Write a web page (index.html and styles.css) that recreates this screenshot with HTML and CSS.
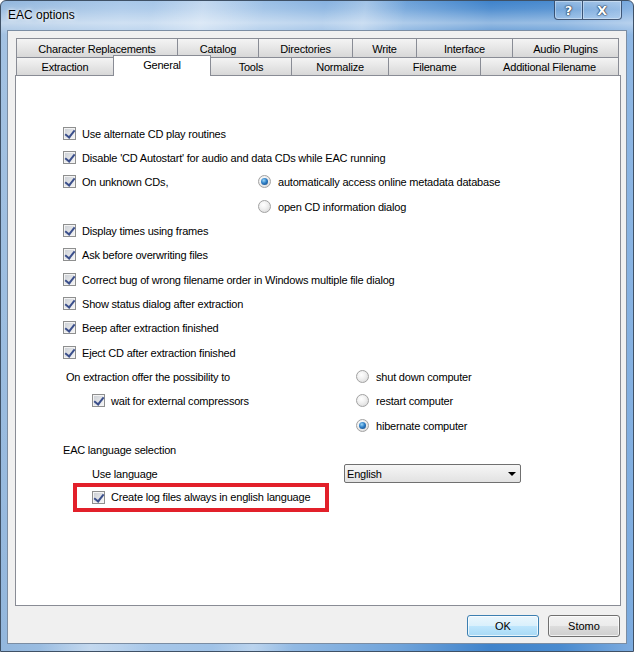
FILE: index.html
```html
<!DOCTYPE html>
<html lang="en">
<head>
    <meta charset="UTF-8">
    <title>EAC options</title>
    <link rel="stylesheet" href="styles.css">
</head>
<body>
    <div class="window">
        <div class="titlebar">
            <span class="title">EAC options</span>
            <div class="caption">
                <span class="cap cap-help">?</span>
                <span class="cap cap-close">X</span>
            </div>
        </div>

        <div class="client">
            <div class="tabs">
                <div class="tab-row back">
                    <div class="tab w-char">Character Replacements</div>
                    <div class="tab w-catalog">Catalog</div>
                    <div class="tab w-dirs">Directories</div>
                    <div class="tab w-write">Write</div>
                    <div class="tab w-iface">Interface</div>
                    <div class="tab w-plugins">Audio Plugins</div>
                </div>
                <div class="tab-row front">
                    <div class="tab w-extract">Extraction</div>
                    <div class="tab w-general active">General</div>
                    <div class="tab w-tools">Tools</div>
                    <div class="tab w-norm">Normalize</div>
                    <div class="tab w-fname">Filename</div>
                    <div class="tab w-addfname">Additional Filename</div>
                </div>
            </div>

            <div class="panel">
                <div class="row"><span class="cb"></span><span>Use alternate CD play routines</span></div>
                <div class="row"><span class="cb"></span><span>Disable 'CD Autostart' for audio and data CDs while EAC running</span></div>
                <div class="row">
                    <div class="col-a"><span class="cb"></span><span>On unknown CDs,</span></div>
                    <span class="rb on"></span><span>automatically access online metadata database</span>
                </div>
                <div class="row">
                    <div class="col-a"></div>
                    <span class="rb"></span><span>open CD information dialog</span>
                </div>
                <div class="row"><span class="cb"></span><span>Display times using frames</span></div>
                <div class="row"><span class="cb"></span><span>Ask before overwriting files</span></div>
                <div class="row"><span class="cb"></span><span>Correct bug of wrong filename order in Windows multiple file dialog</span></div>
                <div class="row"><span class="cb"></span><span>Show status dialog after extraction</span></div>
                <div class="row"><span class="cb"></span><span>Beep after extraction finished</span></div>
                <div class="row"><span class="cb"></span><span>Eject CD after extraction finished</span></div>
                <div class="row">
                    <div class="col-b"><span class="note">On extraction offer the possibility to</span></div>
                    <span class="rb"></span><span>shut down computer</span>
                </div>
                <div class="row">
                    <div class="col-b indent"><span class="cb"></span><span>wait for external compressors</span></div>
                    <span class="rb"></span><span>restart computer</span>
                </div>
                <div class="row">
                    <div class="col-b"></div>
                    <span class="rb on"></span><span>hibernate computer</span>
                </div>
                <div class="row"><span>EAC language selection</span></div>
                <div class="row">
                    <div class="col-c indent"><span>Use language</span></div>
                    <div class="select"><span>English</span></div>
                </div>
                <div class="highlight">
                    <span class="cb"></span><span>Create log files always in english language</span>
                </div>
            </div>

            <div class="buttons">
                <button class="btn default">OK</button>
                <button class="btn">Stomo</button>
            </div>
        </div>
    </div>
</body>
</html>
```

FILE: styles.css
```css
:root {
    --frame-line: #3f5166;
    --tab-border: #898c95;
    --dialog-bg: #f0f0f0;
    --check-blue: #3b4f8b;
    --mark-red: #e2202a;
}

* {
    margin: 0;
    padding: 0;
    box-sizing: border-box;
}

body {
    font-family: "Liberation Sans", Arial, sans-serif;
    font-size: 11px;
    letter-spacing: -0.2px;
    color: #000;
    background: #fff;
    width: 634px;
    height: 652px;
    overflow: hidden;
}

.window {
    width: 634px;
    height: 652px;
    padding: 0 6px 7px 6px;
    border: 1px solid var(--frame-line);
    border-radius: 6px 6px 0 0;
    display: flex;
    flex-direction: column;
    background:
        linear-gradient(to bottom, rgba(255,255,255,0) 0, rgba(255,255,255,0.1) 8px, rgba(255,255,255,0.45) 22px, rgba(255,255,255,0.15) 34px, rgba(255,255,255,0) 100%),
        linear-gradient(100deg, rgba(255,255,255,0) 150px, rgba(255,255,255,0.35) 200px, rgba(255,255,255,0) 260px, rgba(255,255,255,0) 320px, rgba(255,255,255,0.3) 360px, rgba(255,255,255,0) 400px),
        linear-gradient(to right, #93b7dd 0, #a9c8e9 120px, #9cc0e6 260px, #6fa3da 400px, #3f83cb 490px, #4a8bcf 560px, #7fade0 634px);
}

/* title bar */
.titlebar {
    height: 29px;
    display: flex;
    justify-content: space-between;
    align-items: flex-start;
}

.title {
    font-size: 12px;
    letter-spacing: 0;
    padding: 7px 0 0 1px;
    text-shadow: 0 0 6px #fff, 0 0 3px #fff;
}

.caption {
    display: flex;
    margin-right: 5px;
}

.cap {
    height: 19px;
    display: flex;
    align-items: center;
    justify-content: center;
    border: 1px solid rgba(30, 50, 80, 0.75);
    border-top: none;
    color: #fff;
    font-family: "DejaVu Sans", sans-serif;
    font-weight: bold;
    font-size: 13px;
    letter-spacing: 0;
    text-shadow: 0 0 2px #1d3048, 0 0 1px #1d3048, 0 0 1px #1d3048;
    background: linear-gradient(to bottom, rgba(255,255,255,0.4), rgba(255,255,255,0.15) 50%, rgba(190,220,250,0.3));
    box-shadow: inset 0 0 0 1px rgba(255,255,255,0.35);
}

.cap-help {
    width: 29px;
    border-radius: 0 0 0 4px;
}

.cap-close {
    width: 39px;
    border-left: none;
    border-radius: 0 0 4px 0;
}

/* client area */
.client {
    flex: 1;
    background: var(--dialog-bg);
    border: 1px solid #7b8da3;
    display: flex;
    flex-direction: column;
}

.tabs {
    margin: 7px 0 0 8px;
}

.tab-row {
    display: flex;
    align-items: flex-start;
}

.tab {
    display: flex;
    align-items: center;
    justify-content: center;
    border: 1px solid var(--tab-border);
    border-bottom: none;
    margin-left: -1px;
    padding-top: 1px;
    background: linear-gradient(to bottom, #f4f4f4, #e6e6e6 50%, #d8d8d8);
    white-space: nowrap;
}

.tab:first-child {
    margin-left: 0;
}

.back .tab {
    height: 19px;
}

.front .tab {
    height: 18px;
}

.tab.active {
    background: #fff;
    height: 21px;
    margin-top: -2px;
    margin-bottom: -1px;
    padding: 0 0 3px;
    position: relative;
    z-index: 1;
}

.w-char { width: 162px; }
.w-catalog { width: 82px; }
.w-dirs { width: 95px; }
.w-write { width: 65px; }
.w-iface { width: 97px; }
.w-plugins { width: 107px; }
.w-extract { width: 98px; }
.w-general { width: 98px; }
.w-tools { width: 82px; }
.w-norm { width: 98px; }
.w-fname { width: 93px; }
.w-addfname { width: 139px; }

/* tab page */
.panel {
    margin-left: 7px;
    width: 606px;
    height: 531px;
    background: #fff;
    border: 1px solid var(--tab-border);
    padding: 45px 0 0 47px;
}

.row {
    display: flex;
    align-items: center;
    height: 24.33px;
    white-space: nowrap;
}

.row span:not(.cb):not(.rb) {
    padding-top: 1px;
}

.col-a,
.col-b,
.col-c {
    display: flex;
    align-items: center;
    flex: none;
}

.col-a { width: 195px; }
.col-b { width: 293px; }
.col-c { width: 281px; }

.indent {
    padding-left: 29px;
}

.row .note {
    padding-left: 3px;
}

.cb {
    width: 13px;
    height: 13px;
    flex: none;
    margin-right: 6px;
    position: relative;
    border: 1px solid #8e8f8f;
    background: linear-gradient(135deg, #c9cdd3, #f7f7f7);
    box-shadow: inset 0 0 0 1px #f3f3f3;
}

.cb::after {
    content: "";
    position: absolute;
    left: 3px;
    top: 0;
    width: 4px;
    height: 8px;
    border: solid var(--check-blue);
    border-width: 0 2px 2px 0;
    transform: rotate(38deg);
}

.rb {
    width: 13px;
    height: 13px;
    flex: none;
    margin-right: 7px;
    position: relative;
    border-radius: 50%;
    border: 1px solid #a2a2a2;
    background: radial-gradient(circle at 40% 35%, #fff 0, #f1f1f1 40%, #d4d4d4 100%);
}

.rb.on::after {
    content: "";
    position: absolute;
    left: 2px;
    top: 2px;
    width: 7px;
    height: 7px;
    border-radius: 50%;
    background: radial-gradient(circle at 40% 35%, #9ad6f8 0, #2f7fc6 45%, #113f78 100%);
}

.select {
    width: 177px;
    height: 19px;
    flex: none;
    display: flex;
    align-items: center;
    justify-content: space-between;
    padding: 0 4px 0 2px;
    border: 1px solid #707070;
    border-radius: 2px;
    background: linear-gradient(to bottom, #f6f6f6, #ececec 50%, #e2e2e2);
}

.select::after {
    content: "";
    border-left: 4px solid transparent;
    border-right: 4px solid transparent;
    border-top: 4px solid #000;
}

.highlight {
    display: flex;
    align-items: center;
    width: 256px;
    height: 29px;
    margin: -3px 0 0 10px;
    padding-left: 15px;
    border: 4px solid var(--mark-red);
    white-space: nowrap;
}

/* dialog buttons */
.buttons {
    display: flex;
    justify-content: flex-end;
    gap: 9px;
    margin-top: 9px;
    padding-right: 6px;
}

.btn {
    width: 72px;
    height: 22px;
    font-family: inherit;
    font-size: 11px;
    color: #000;
    border: 1px solid #707070;
    border-radius: 3px;
    background: linear-gradient(to bottom, #f2f2f2 0, #ebebeb 50%, #dddddd 50%, #cfcfcf 100%);
    box-shadow: inset 0 0 0 1px rgba(255,255,255,0.7);
}

.btn.default {
    border-color: #3c7fb1;
    background: linear-gradient(to bottom, #eaf6fd 0, #d9f0fc 50%, #bee6fd 50%, #a7d9f5 100%);
}
```
